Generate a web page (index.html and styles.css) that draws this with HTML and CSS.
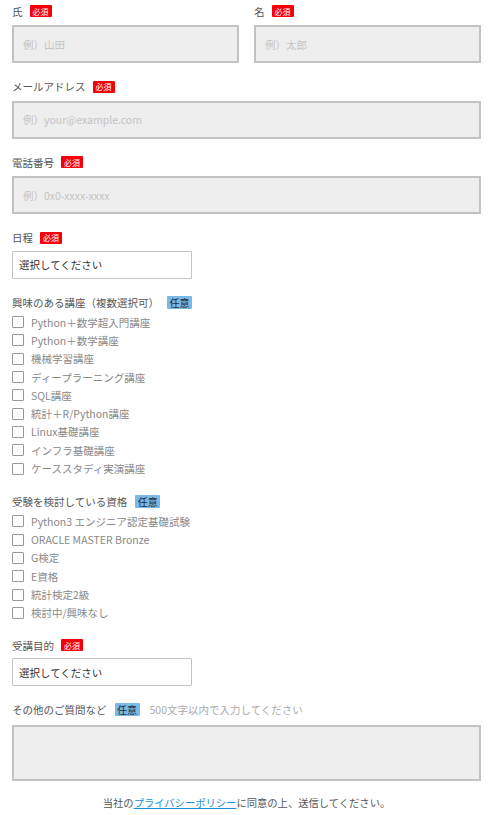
FILE: index.html
```html
<!DOCTYPE html>
<html lang="ja">
<head>
    <meta charset="UTF-8">
    <meta name="viewport" content="width=device-width, initial-scale=1.0">
    <title>お申し込みフォーム</title>
    <link rel="stylesheet" href="styles.css">
</head>
<body>
    <form id="entryForm" class="entry-form" method="POST" action="/entry">
        <div class="field-row">
            <div class="field">
                <label class="field-label" for="lastName">氏<span class="badge badge-req">必須</span></label>
                <input class="text-input" type="text" id="lastName" name="lastName" placeholder="例）山田" required>
            </div>
            <div class="field">
                <label class="field-label" for="firstName">名<span class="badge badge-req">必須</span></label>
                <input class="text-input" type="text" id="firstName" name="firstName" placeholder="例）太郎" required>
            </div>
        </div>

        <div class="field">
            <label class="field-label" for="email">メールアドレス<span class="badge badge-req">必須</span></label>
            <input class="text-input" type="email" id="email" name="email" placeholder="例）your@example.com" required>
        </div>

        <div class="field">
            <label class="field-label" for="tel">電話番号<span class="badge badge-req">必須</span></label>
            <input class="text-input" type="tel" id="tel" name="tel" placeholder="例）0x0-xxxx-xxxx" required>
        </div>

        <div class="field">
            <label class="field-label field-label-select" for="schedule">日程<span class="badge badge-req">必須</span></label>
            <select class="select-input" id="schedule" name="schedule" required>
                <option value="">選択してください</option>
            </select>
        </div>

        <div class="field">
            <p class="field-label field-label-list">興味のある講座（複数選択可）<span class="badge badge-opt">任意</span></p>
            <ul class="check-list">
                <li><label><input type="checkbox" name="course" value="1">Python＋数学超入門講座</label></li>
                <li><label><input type="checkbox" name="course" value="2">Python＋数学講座</label></li>
                <li><label><input type="checkbox" name="course" value="3">機械学習講座</label></li>
                <li><label><input type="checkbox" name="course" value="4">ディープラーニング講座</label></li>
                <li><label><input type="checkbox" name="course" value="5">SQL講座</label></li>
                <li><label><input type="checkbox" name="course" value="6">統計＋R/Python講座</label></li>
                <li><label><input type="checkbox" name="course" value="7">Linux基礎講座</label></li>
                <li><label><input type="checkbox" name="course" value="8">インフラ基礎講座</label></li>
                <li><label><input type="checkbox" name="course" value="9">ケーススタディ実演講座</label></li>
            </ul>
        </div>

        <div class="field">
            <p class="field-label field-label-list">受験を検討している資格<span class="badge badge-opt">任意</span></p>
            <ul class="check-list">
                <li><label><input type="checkbox" name="exam" value="1">Python3 エンジニア認定基礎試験</label></li>
                <li><label><input type="checkbox" name="exam" value="2">ORACLE MASTER Bronze</label></li>
                <li><label><input type="checkbox" name="exam" value="3">G検定</label></li>
                <li><label><input type="checkbox" name="exam" value="4">E資格</label></li>
                <li><label><input type="checkbox" name="exam" value="5">統計検定2級</label></li>
                <li><label><input type="checkbox" name="exam" value="6">検討中/興味なし</label></li>
            </ul>
        </div>

        <div class="field">
            <label class="field-label field-label-select" for="purpose">受講目的<span class="badge badge-req">必須</span></label>
            <select class="select-input" id="purpose" name="purpose" required>
                <option value="">選択してください</option>
            </select>
        </div>

        <div class="field field-last">
            <label class="field-label field-label-area" for="question">その他のご質問など<span class="badge badge-opt">任意</span><span class="field-note">500文字以内で入力してください</span></label>
            <textarea class="text-area" id="question" name="question" maxlength="500"></textarea>
        </div>

        <p class="policy">当社の<a href="/privacy">プライバシーポリシー</a>に同意の上、送信してください。</p>
    </form>
</body>
</html>
```

FILE: styles.css
```css
body { margin: 0; font-family: "Noto Sans CJK JP", "Noto Sans", sans-serif; color: #555; font-size: 10.5px; background: #fff; }
.entry-form { padding: 4px 19px 0 12px; }
.field { margin-bottom: 16.5px; }
.field-last { margin-bottom: 0; }
.field-row { display: grid; grid-template-columns: 1fr 1fr; column-gap: 15px; }
.field-label { display: flex; align-items: center; height: 14px; margin: 0 0 7px; font-size: 10.5px; color: #555; white-space: nowrap; }
.field-label-select { margin-bottom: 6px; }
.field-label-list { margin-bottom: 4px; }
.field-label-area { margin-bottom: 8px; }
.badge { display: inline-flex; align-items: center; justify-content: center; margin-left: 8px; border-radius: 1px; }
.badge-req { width: 22px; height: 12px; background: #f4000b; color: #fff; font-size: 8px; margin-left: 7px; }
.badge-opt { width: 25px; height: 13px; background: #79b9e6; color: #1f2a33; font-size: 10px; }
.field-note { margin-left: 10px; color: #aaa; }
.text-input { display: block; box-sizing: border-box; width: 100%; height: 38px; padding: 0 9px; border: 2px solid #c2c2c2; background: #eee; font-family: inherit; font-size: 10.5px; color: #333; }
.text-input::placeholder { color: #c4c4c4; }
.select-input { display: block; box-sizing: border-box; width: 180px; height: 28px; padding: 0 6px; border: 1.5px solid #c4c4c4; border-radius: 1px; background: #fff; font-family: inherit; font-size: 10.5px; color: #333; appearance: none; -webkit-appearance: none; }
.check-list { list-style: none; margin: 0; padding: 0; }
.check-list li { height: 18.3px; }
.check-list label { display: flex; align-items: center; height: 100%; color: #888; font-size: 10.5px; }
.check-list input { appearance: none; -webkit-appearance: none; box-sizing: border-box; width: 12px; height: 12px; margin: 0 7px 0 0; border: 1px solid #999; border-radius: 1px; background: #fff; }
.text-area { display: block; box-sizing: border-box; width: 100%; height: 56px; border: 2px solid #c2c2c2; background: #eee; resize: none; font-family: inherit; font-size: 10.5px; }
.policy { margin: 15px 0 0; height: 14px; line-height: 14px; text-align: center; color: #555; font-size: 10.3px; }
.policy a { color: #1a8fd8; }
```
